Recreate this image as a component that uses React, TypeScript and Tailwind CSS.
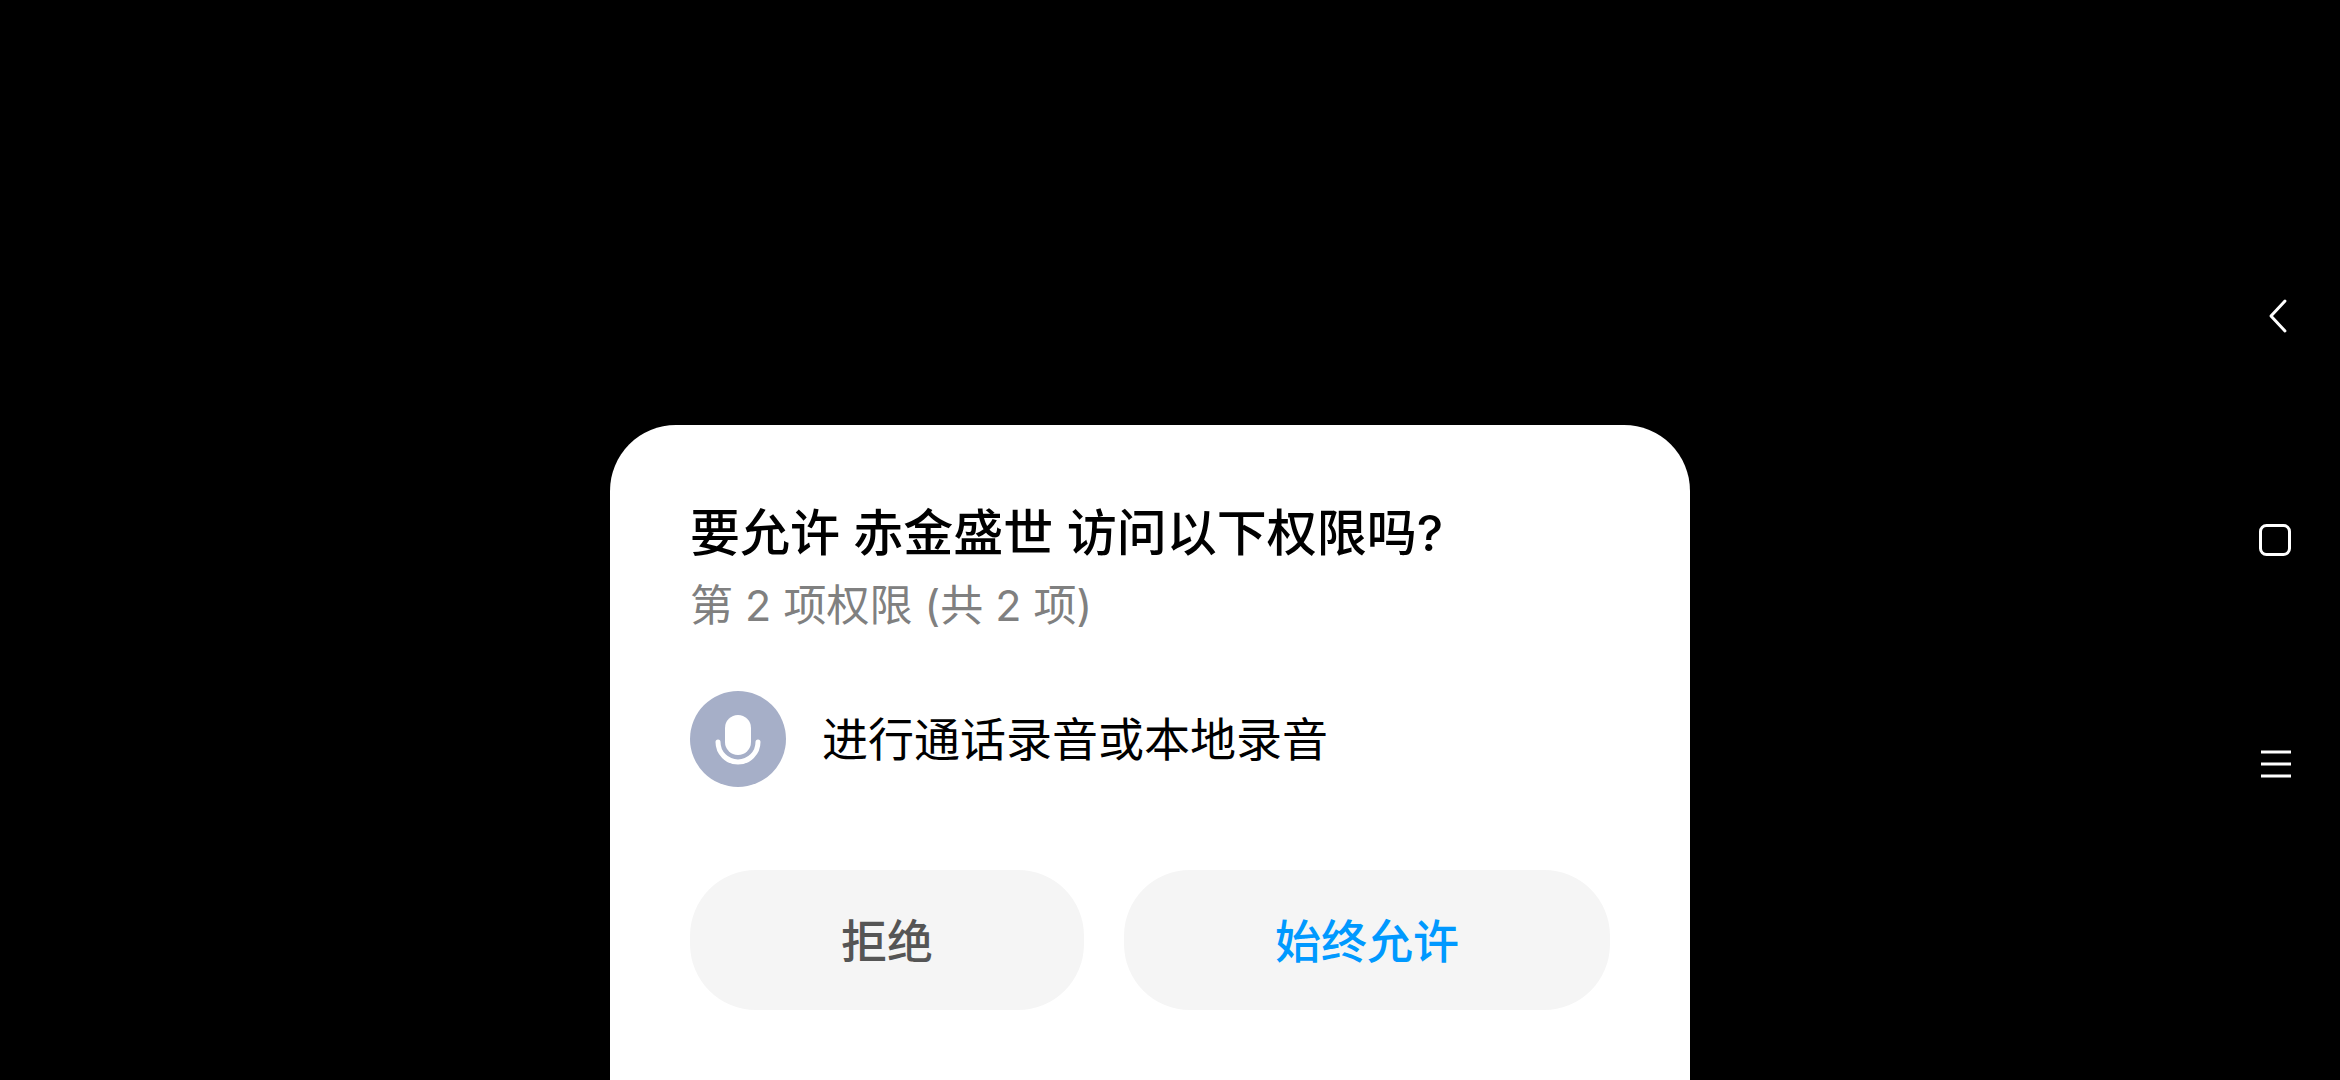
function MicIcon() {
  return (
    <svg viewBox="0 0 96 96" className="size-24 shrink-0" aria-hidden="true">
      <circle cx="48" cy="48" r="48" fill="#a6afc8" />
      <rect x="35" y="24" width="26" height="40" rx="13" fill="#fff" />
      <path d="M28 51a20 20 0 0 0 40 0" fill="none" stroke="#fff" strokeWidth="5" strokeLinecap="round" />
    </svg>
  );
}

function NavigationBar() {
  const button = "flex h-56 w-full items-center justify-center";
  return (
    <nav className="flex w-[130px] shrink-0 flex-col justify-center" aria-label="系统导航">
      <button type="button" className={button} aria-label="返回">
        <svg viewBox="0 0 40 40" className="size-10" fill="none" stroke="#fff" strokeWidth="3" strokeLinecap="round" strokeLinejoin="round">
          <path d="M30 5 16 20l14 15" />
        </svg>
      </button>
      <button type="button" className={button} aria-label="主屏幕">
        <svg viewBox="0 0 40 40" className="size-10" fill="none" stroke="#fff" strokeWidth="3">
          <rect x="5.5" y="5.500" width="29" height="29" rx="6" />
        </svg>
      </button>
      <button type="button" className={button} aria-label="最近任务">
        <svg viewBox="0 0 40 40" className="size-10" fill="none" stroke="#fff" strokeWidth="3">
          <path d="M6 8h30M6 20h30M6 32h30" />
        </svg>
      </button>
    </nav>
  );
}

export default function App() {
  return (
    <div className="flex min-h-screen bg-black pl-[90px] font-['Inter','Noto_Sans_CJK_SC',sans-serif]" lang="zh-CN">
      <main className="flex min-w-0 flex-1 items-end justify-center">
        <section
          role="dialog"
          aria-labelledby="permission-title"
          className="w-full max-w-[1080px] rounded-t-[66px] bg-white px-20 pt-[76px] pb-[70px]"
        >
          <h1 id="permission-title" className="text-[50px] leading-[64px] font-medium text-black">
            要允许 赤金盛世 访问以下权限吗?
          </h1>
          <p className="mt-2 text-[43px] leading-[64px] text-[#808080]">第 2 项权限 (共 2 项)</p>
          <div className="mt-[54px] flex items-center gap-9">
            <MicIcon />
            <span className="text-[46px] leading-[64px] text-black">进行通话录音或本地录音</span>
          </div>
          <div className="mt-[83px] flex gap-10">
            <button
              type="button"
              className="h-[140px] flex-auto rounded-[66px] bg-[#f5f5f5] pt-0.5 text-[46px] font-medium text-[#555555]"
            >
              拒绝
            </button>
            <button
              type="button"
              className="h-[140px] flex-auto rounded-[66px] bg-[#f5f5f5] pt-0.5 text-[46px] font-medium text-[#0099ff]"
            >
              始终允许
            </button>
          </div>
        </section>
      </main>
      <NavigationBar />
    </div>
  );
}
